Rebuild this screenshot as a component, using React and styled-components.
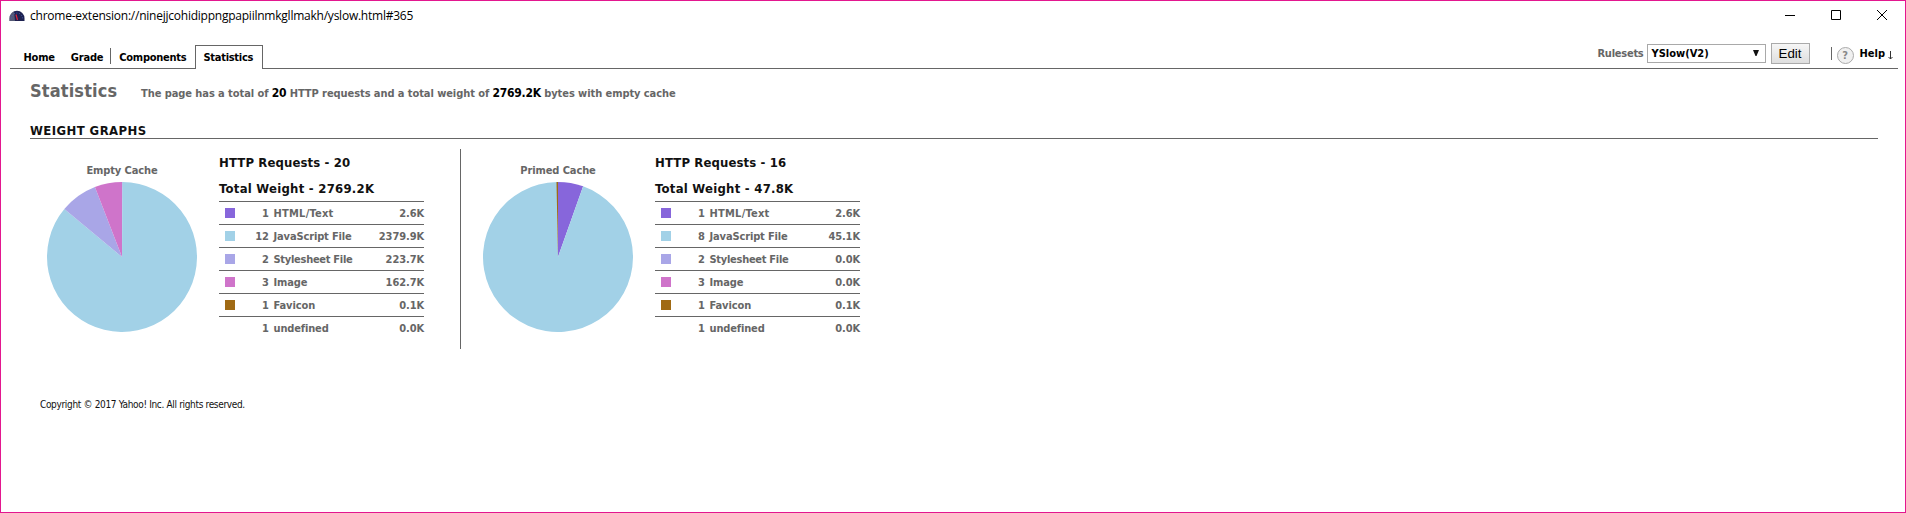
import React from "react";
import styled, { createGlobalStyle } from "styled-components";

const RULE = "#666";
const TAHOMA = 'Tahoma, "DejaVu Sans Condensed", "DejaVu Sans", sans-serif';

const GlobalStyle = createGlobalStyle`
  *, *::before, *::after { box-sizing: border-box; }
  body { margin: 0; background: #fff; overflow: hidden; }
`;

const Window = styled.div`
  display: flex;
  flex-direction: column;
  width: 100%;
  height: 513px;
  border: 1px solid #e3178f;
  background: #fff;
  color: #666;
  font: bold 11px/14px ${TAHOMA};
  white-space: nowrap;
`;

const TitleBar = styled.header`
  display: flex;
  align-items: center;
  height: 30px;
  padding: 0 17px 0 8px;
`;

const Favicon = styled.svg`
  display: block;
  margin-right: 5px;
`;

const Address = styled.span`
  flex: 1;
  color: #000;
  font: 400 12px/16px "Segoe UI", "Open Sans", "Noto Sans", sans-serif;
  letter-spacing: -0.235px;
`;

const WindowControls = styled.div`
  display: flex;
  gap: 34px;
  padding-bottom: 2px;
`;

const ControlIcon = styled.svg`
  display: block;
  width: 12px;
  height: 12px;
  fill: none;
  stroke: #000;
`;

const Toolbar = styled.div`
  display: flex;
  justify-content: space-between;
  align-items: flex-end;
  height: 38px;
  margin: 0 7px 0 9px;
  border-bottom: 1px solid ${RULE};
`;

const Tabs = styled.nav`
  display: flex;
  align-items: flex-end;
  margin-bottom: -1px;
  color: #000;
`;

const Tab = styled.a`
  height: 24px;
  padding-top: 6px;
  margin-left: ${(p) => p.$gap}px;
  letter-spacing: ${(p) => p.$track || 0}px;
  ${(p) =>
    p.$active &&
    `
    width: 68px;
    padding: 5px 0 0 8px;
    border: 1px solid ${RULE};
    border-bottom: 0;
    background: #fff;
  `}
`;

const TabDivider = styled.i`
  width: 1px;
  height: 16px;
  margin: 0 0 5px 7px;
  background: ${RULE};
`;

const Tools = styled.div`
  display: flex;
  align-items: center;
  height: 21px;
  margin: 0 5px 4px 0;
`;

const ToolLabel = styled.label`
  margin-right: 3px;
  padding-top: 1px;
  letter-spacing: -0.25px;
`;

const RulesetSelect = styled.div`
  display: flex;
  align-items: center;
  justify-content: space-between;
  width: 119px;
  height: 19px;
  padding: 0 6px 0 4px;
  border: 1px solid #a9a9a9;
  color: #000;
  line-height: 15px;
`;

const EditButton = styled.button`
  width: 39px;
  height: 21px;
  margin-left: 5px;
  padding: 0;
  border: 1px solid #aaa;
  background: linear-gradient(#f6f6f6, #dedede);
  color: #000;
  font: 400 13.33px/18px Arial, "Liberation Sans", sans-serif;
`;

const ToolDivider = styled.i`
  width: 1px;
  height: 13px;
  margin: 0 5px 0 21px;
  background: ${RULE};
`;

const HelpBadge = styled.span`
  width: 17px;
  height: 17px;
  margin: 3px 6px 0 0;
  border: 1px solid #aaa;
  border-radius: 50%;
  background: #f0f0f0;
  color: #888;
  font-size: 11px;
  line-height: 15px;
  text-align: center;
`;

const HelpLink = styled.a`
  display: flex;
  align-items: center;
  gap: 3px;
  padding-top: 1px;
  color: #000;
`;

const DownArrow = styled.svg`
  display: block;
  margin-top: 2px;
`;

const Summary = styled.section`
  display: flex;
  align-items: baseline;
  height: 22px;
  margin: 11px 0 0 29px;
`;

const PageTitle = styled.h1`
  width: 111px;
  margin: 0;
  font-size: 18px;
  line-height: 22px;
  letter-spacing: 0.15px;
`;

const SummaryText = styled.p`
  margin: 0;
  letter-spacing: -0.07px;
`;

const Figure = styled.b`
  color: #000;
  font-size: 12px;
  letter-spacing: -0.25px;
`;

const SectionTitle = styled.h2`
  height: 19px;
  margin: 18px 27px 0 29px;
  border-bottom: 1px solid ${RULE};
  color: #111;
  font-size: 13px;
  line-height: 22px;
  letter-spacing: 0.42px;
`;

const Graphs = styled.section`
  display: flex;
  margin: 10px 0 0 46px;
`;

const Graph = styled.article`
  display: flex;
  height: 200px;
  & + & {
    margin-left: 36px;
    padding-left: 22px;
    border-left: 1px solid ${RULE};
  }
`;

const Chart = styled.figure`
  display: flex;
  flex-direction: column;
  align-items: center;
  width: 150px;
  margin: 15px 22px 0 0;
  gap: 4px;
`;

const ChartTitle = styled.figcaption`
  letter-spacing: -0.1px;
`;

const Pie = styled.svg`
  display: block;
  width: 150px;
  height: 150px;
`;

const Breakdown = styled.div`
  width: 205px;
`;

const Total = styled.h3`
  height: 26px;
  margin: 0;
  color: #111;
  font-size: 13px;
  line-height: 28px;
  letter-spacing: ${(p) => p.$track}px;
`;

const Row = styled.div`
  display: grid;
  grid-template-columns: 10px 29px 1fr auto;
  column-gap: 5px;
  align-items: center;
  height: 23px;
  padding: 0 0 0 6px;
  border-top: 1px solid ${RULE};
`;

const Swatch = styled.i`
  width: 10px;
  height: 10px;
  background: ${(p) => p.$color};
`;

const Cell = styled.span`
  padding-top: 2px;
`;

const CountCell = styled(Cell)`
  text-align: right;
`;

const TypeCell = styled(Cell)`
  margin-left: -0.5px;
  letter-spacing: ${(p) => p.$track}px;
`;

const SizeCell = styled(Cell)`
  letter-spacing: -0.1px;
`;

const Footer = styled.footer`
  margin: 49px 0 0 39px;
  color: #111;
  font-size: 10px;
  font-weight: 400;
  letter-spacing: -0.335px;
`;

const TYPES = [
  { name: "HTML/Text", color: "#8766db", track: 0.24 },
  { name: "JavaScript File", color: "#a2d1e7", track: -0.14 },
  { name: "Stylesheet File", color: "#a9a6e7", track: -0.28 },
  { name: "Image", color: "#cf74ca", track: -0.1 },
  { name: "Favicon", color: "#a06a14", track: -0.1 },
  { name: "undefined", color: "transparent", track: -0.15 },
];

const CACHES = [
  {
    title: "Empty Cache",
    requests: 20,
    weight: "2769.2K",
    counts: [1, 12, 2, 3, 1, 1],
    sizes: [2.6, 2379.9, 223.7, 162.7, 0.1, 0],
  },
  {
    title: "Primed Cache",
    requests: 16,
    weight: "47.8K",
    counts: [1, 8, 2, 3, 1, 1],
    sizes: [2.6, 45.1, 0, 0, 0.1, 0],
  },
];

function PieChart({ sizes }) {
  const total = sizes.reduce((sum, n) => sum + n, 0);
  const point = (t) => {
    const a = t * 2 * Math.PI;
    return `${(75 + 75 * Math.sin(a)).toFixed(3)} ${(75 - 75 * Math.cos(a)).toFixed(3)}`;
  };
  let start = 0;
  return (
    <Pie viewBox="0 0 150 150">
      {sizes.map((size, i) => {
        const from = start;
        // Slivers keep a minimum share so that they stay visible.
        const share = size / total;
        start += share;
        if (!size) return null;
        const shown = share > 0.001 && share < 0.003 ? start - 0.0032 : from;
        const d = `M75 75L${point(shown)}A75 75 0 ${share > 0.5 ? 1 : 0} 1 ${point(start)}Z`;
        return <path key={i} d={d} fill={TYPES[i].color} />;
      })}
    </Pie>
  );
}

function CacheGraph({ title, requests, weight, counts, sizes }) {
  return (
    <Graph>
      <Chart>
        <ChartTitle>{title}</ChartTitle>
        <PieChart sizes={sizes} />
      </Chart>
      <Breakdown>
        <Total $track={0.12}>HTTP Requests - {requests}</Total>
        <Total $track={0.25}>Total Weight - {weight}</Total>
        {TYPES.map((type, i) => (
          <Row key={type.name}>
            <Swatch $color={type.color} />
            <CountCell>{counts[i]}</CountCell>
            <TypeCell $track={type.track}>{type.name}</TypeCell>
            <SizeCell>{sizes[i].toFixed(1)}K</SizeCell>
          </Row>
        ))}
      </Breakdown>
    </Graph>
  );
}

export default function App() {
  return (
    <>
      <GlobalStyle />
      <Window>
        <TitleBar>
          <Favicon width="16" height="12" viewBox="0 0 16 12">
            <path d="M.5 11V8.5A7.5 7.8 0 0 1 15.5 8.5V11Z" fill="#1d2150" />
            <path d="M.5 11V8.5A7.5 7.8 0 0 1 5 1.5L6 11Z" fill="#7b7f8f" opacity=".6" />
            <path d="M2.5 8.5A5.5 5.5 0 0 1 13.5 8.5" fill="none" stroke="#4a63b8" strokeDasharray="1 1.6" />
            <path d="M8.5 10L7 4.5" stroke="#e0233a" strokeWidth="1.2" />
          </Favicon>
          <Address>chrome-extension://ninejjcohidippngpapiilnmkgllmakh/yslow.html#365</Address>
          <WindowControls>
            <ControlIcon viewBox="0 0 12 12"><path d="M1 6.5H11" /></ControlIcon>
            <ControlIcon viewBox="0 0 12 12"><path d="M1.5 1.5H10.5V10.5H1.5Z" /></ControlIcon>
            <ControlIcon viewBox="0 0 12 12"><path d="M1 1L11 11M11 1L1 11" /></ControlIcon>
          </WindowControls>
        </TitleBar>
        <Toolbar>
          <Tabs>
            <Tab $gap={13.5} $track={-0.2}>Home</Tab>
            <Tab $gap={16} $track={-0.2}>Grade</Tab>
            <TabDivider />
            <Tab $gap={8} $track={-0.25}>Components</Tab>
            <Tab $gap={8} $track={-0.28} $active>Statistics</Tab>
          </Tabs>
          <Tools>
            <ToolLabel>Rulesets</ToolLabel>
            <RulesetSelect>
              YSlow(V2)
              <svg width="6" height="7" viewBox="0 0 6 7"><path d="M0 0H6L3.5 6H2.5Z" fill="#111" /></svg>
            </RulesetSelect>
            <EditButton>Edit</EditButton>
            <ToolDivider />
            <HelpBadge>?</HelpBadge>
            <HelpLink>
              Help
              <DownArrow width="5" height="9" viewBox="0 0 5 9"><path d="M2.5 0V8M.5 6L2.5 8L4.5 6" fill="none" stroke="#333" /></DownArrow>
            </HelpLink>
          </Tools>
        </Toolbar>
        <Summary>
          <PageTitle>Statistics</PageTitle>
          <SummaryText>
            The page has a total of <Figure>20</Figure> HTTP requests and a total weight of{" "}
            <Figure>2769.2K</Figure> bytes with empty cache
          </SummaryText>
        </Summary>
        <SectionTitle>WEIGHT GRAPHS</SectionTitle>
        <Graphs>
          {CACHES.map((cache) => (
            <CacheGraph key={cache.title} {...cache} />
          ))}
        </Graphs>
        <Footer>Copyright © 2017 Yahoo! Inc. All rights reserved.</Footer>
      </Window>
    </>
  );
}
